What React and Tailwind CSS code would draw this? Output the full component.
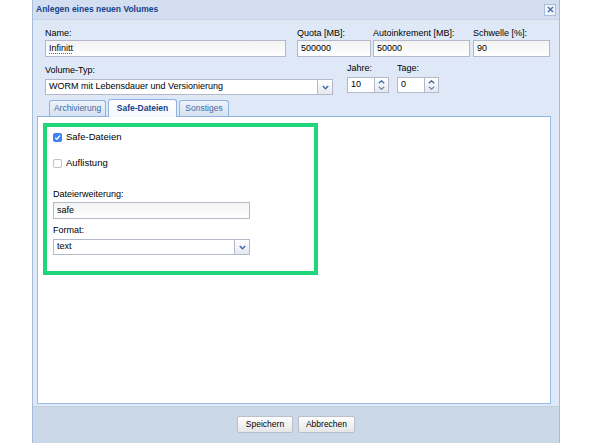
import React from 'react'

function Chevron() {
  return (
    <svg width="7" height="5" viewBox="0 0 7 5">
      <path d="M0.8 1 L3.5 3.7 L6.2 1" fill="none" stroke="#3d68a6" strokeWidth="1.4" />
    </svg>
  )
}

function TextField({ value, className = '', spell = false }) {
  return (
    <div className={`h-[17px] bg-white border border-[#b5b8c8] bg-gradient-to-b from-[#f3f3f3] to-white px-[3px] flex items-center text-[9px] text-black ${className}`}>
      {spell ? <span className="underline decoration-dotted decoration-[#d33] underline-offset-2">{value}</span> : value}
    </div>
  )
}

function Combo({ value, className = '' }) {
  return (
    <div className={`flex h-[16px] ${className}`}>
      <div className="flex-1 bg-white border border-[#b5b8c8] px-[3px] flex items-center text-[9px] text-black">{value}</div>
      <div className="w-[15px] border border-l-0 border-[#b5b8c8] bg-gradient-to-b from-white to-[#e4e9ef] flex items-center justify-center">
        <Chevron />
      </div>
    </div>
  )
}

function Spinner({ value }) {
  return (
    <div className="flex h-[16px] w-[42px]">
      <div className="flex-1 bg-white border border-[#b5b8c8] px-[3px] flex items-center text-[9px] text-black">{value}</div>
      <div className="w-[14px] border border-l-0 border-[#b5b8c8] bg-gradient-to-b from-white to-[#e4e9ef] flex flex-col items-center justify-center gap-[2px]">
        <svg width="7" height="4" viewBox="0 0 7 4">
          <path d="M0.8 3.3 L3.5 0.8 L6.2 3.3" fill="none" stroke="#3d68a6" strokeWidth="1.3" />
        </svg>
        <svg width="7" height="4" viewBox="0 0 7 4">
          <path d="M0.8 0.8 L3.5 3.3 L6.2 0.8" fill="none" stroke="#7a8fae" strokeWidth="1.3" />
        </svg>
      </div>
    </div>
  )
}

function Label({ children, className = '' }) {
  return <div className={`h-[11px] leading-[11px] text-[9px] text-black ${className}`}>{children}</div>
}

function Tab({ label, active, className = '' }) {
  return active ? (
    <div className={`h-[18px] -mb-px flex items-center justify-center border border-b-0 border-[#8db2e3] rounded-t-[3px] bg-gradient-to-b from-white to-[#f3f7fc] text-[8.5px] font-bold text-[#15428b] ${className}`}>
      {label}
    </div>
  ) : (
    <div className={`h-[16px] flex items-center justify-center border border-b-0 border-[#8db2e3] rounded-t-[3px] bg-gradient-to-b from-[#eef3fa] to-[#d6e2f2] text-[8.5px] text-[#416aa3] ${className}`}>
      {label}
    </div>
  )
}

export default function App() {
  return (
    <div className="w-[592px] h-[444px] bg-white font-['Liberation_Sans',Arial,sans-serif] overflow-hidden">
      <div className="ml-[32px] w-[528px] h-[443px] border border-t-0 border-[#a6bcd8] flex flex-col bg-[#dfe8f6]">
        {/* header */}
        <div className="h-[20px] shrink-0 bg-[#d3dff0] border-b border-[#c4d4ea] flex items-center justify-between pl-[3px] pr-[3px]">
          <span className="text-[8.5px] font-bold text-[#15428b]">Anlegen eines neuen Volumes</span>
          <div className="w-[12px] h-[12px] border border-[#a9bfdd] bg-[#eef3fa] flex items-center justify-center">
            <svg width="7" height="7" viewBox="0 0 7 7">
              <path d="M1 1 L6 6 M6 1 L1 6" stroke="#4f74b0" strokeWidth="1.5" />
            </svg>
          </div>
        </div>

        {/* body */}
        <div className="flex-1 flex flex-col pl-[12px] pr-[8px]">
          <div className="flex mt-[8px]">
            <div className="w-[241px]">
              <Label>Name:</Label>
              <TextField value="Infinitt" spell className="mt-[1px]" />
            </div>
            <div className="w-[74px] ml-[11px]">
              <Label>Quota [MB]:</Label>
              <TextField value="500000" className="mt-[1px]" />
            </div>
            <div className="w-[97px] ml-[2px]">
              <Label>Autoinkrement [MB]:</Label>
              <TextField value="50000" className="mt-[1px]" />
            </div>
            <div className="w-[77px] ml-[3px]">
              <Label>Schwelle [%]:</Label>
              <TextField value="90" className="mt-[1px]" />
            </div>
          </div>

          <div className="flex mt-[6px]">
            <div className="w-[288px]">
              <Label className="mt-[2px]">Volume-Typ:</Label>
              <Combo value="WORM mit Lebensdauer und Versionierung" className="mt-[3px]" />
            </div>
            <div className="ml-[14px]">
              <Label>Jahre:</Label>
              <div className="mt-[3px]"><Spinner value="10" /></div>
            </div>
            <div className="ml-[8px]">
              <Label>Tage:</Label>
              <div className="mt-[3px]"><Spinner value="0" /></div>
            </div>
          </div>

          {/* tabs */}
          <div className="mt-[4px] -ml-[8px] flex items-end gap-[2px] pl-[12px] border-b border-[#8db2e3] h-[18px]">
            <Tab label="Archivierung" className="w-[57px]" />
            <Tab label="Safe-Dateien" active className="w-[69px]" />
            <Tab label="Sonstiges" className="w-[50px]" />
          </div>

          <div className="-ml-[8px] h-[287px] bg-white border border-t-0 border-[#99bbe8] pl-[5px] pt-[6px]">
            <div className="w-[275px] h-[152px] border-[4px] border-[#1fd67b] px-[6px]">
              <div className="flex items-center gap-[4px] mt-[6px] h-[9px]">
                <div className="w-[9px] h-[9px] rounded-[2px] bg-[#3b82f6] flex items-center justify-center">
                  <svg width="7" height="7" viewBox="0 0 7 7">
                    <path d="M1.2 3.6 L2.9 5.3 L5.9 1.5" fill="none" stroke="white" strokeWidth="1.3" />
                  </svg>
                </div>
                <span className="text-[9.5px] text-black">Safe-Dateien</span>
              </div>
              <div className="flex items-center gap-[4px] mt-[17px] h-[9px]">
                <div className="w-[9px] h-[9px] rounded-[2px] bg-white border border-[#c2c2c2]" />
                <span className="text-[9.5px] text-black">Auflistung</span>
              </div>
              <Label className="mt-[21px]">Dateierweiterung:</Label>
              <TextField value="safe" className="mt-[2px] w-[197px]" />
              <Label className="mt-[6px]">Format:</Label>
              <Combo value="text" className="mt-[3px] w-[197px]" />
            </div>
          </div>
        </div>

        {/* footer */}
        <div className="h-[37px] shrink-0 mt-[2px] border-t border-[#c0cfe2] bg-[#cbd8e8] flex items-center justify-center gap-[5px] pb-[1px]">
          <div className="w-[56px] h-[17px] rounded-[2px] border border-[#b9c0c9] bg-gradient-to-b from-white to-[#e6e6e6] flex items-center justify-center text-[8.5px] text-black">Speichern</div>
          <div className="w-[57px] h-[17px] rounded-[2px] border border-[#b9c0c9] bg-gradient-to-b from-white to-[#e6e6e6] flex items-center justify-center text-[8.5px] text-black">Abbrechen</div>
        </div>
      </div>
    </div>
  )
}
